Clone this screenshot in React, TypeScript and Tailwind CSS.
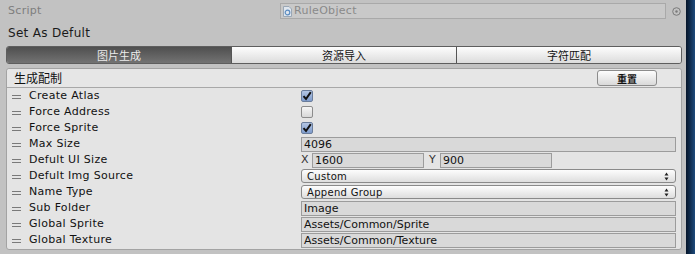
const font = "font-['DejaVu_Sans','Liberation_Sans',sans-serif]";
const cjk = "font-['Noto_Sans_CJK_SC','DejaVu_Sans',sans-serif]";

function Handle() {
  return (
    <div className="flex flex-col gap-[2px] w-[9px] ml-[5px] mr-[8px] mt-[1px]">
      <div className="h-px bg-[#7a7a7a]" />
      <div className="h-px bg-[#7a7a7a]" />
    </div>
  );
}

function Check({ on }: { on: boolean }) {
  return (
    <div
      className={
        "w-[12px] h-[12px] rounded-[2px] border flex items-center justify-center " +
        (on
          ? "border-[#6a7d9c] bg-gradient-to-b from-[#b4c6e4] to-[#7f9ccc]"
          : "border-[#8c8c8c] bg-gradient-to-b from-[#f6f6f6] to-[#d8d8d8]")
      }
    >
      {on && (
        <svg width="10" height="10" viewBox="0 0 10 10">
          <path d="M1.5 5.2 L4 8 L8.8 1.2" fill="none" stroke="#111" strokeWidth="2" />
        </svg>
      )}
    </div>
  );
}

function Field({ text, w }: { text: string; w?: string }) {
  return (
    <div
      className={
        "h-[15px] border border-[#9c9c9c] bg-[#d9d9d9] pl-[2px] text-[11px] leading-[13px] text-[#111] " +
        (w ?? "flex-1")
      }
    >
      {text}
    </div>
  );
}

function Popup({ text }: { text: string }) {
  return (
    <div className="flex-1 h-[14px] rounded-[3px] border border-[#8a8a8a] bg-gradient-to-b from-[#fdfdfd] to-[#dedede] flex items-center justify-between pl-[5px] pr-[6px] text-[10px] tracking-[0.3px] text-[#111]">
      <span>{text}</span>
      <svg width="5" height="9" viewBox="0 0 5 9">
        <path d="M2.5 0.5 L4.5 3.5 L0.5 3.5 Z M2.5 8.5 L4.5 5.5 L0.5 5.5 Z" fill="#222" />
      </svg>
    </div>
  );
}

function Row({ label, children }: { label: string; children: React.ReactNode }) {
  return (
    <div className="h-[16px] flex items-center">
      <div className="w-[294px] flex items-center shrink-0">
        <Handle />
        <span className="text-[11px] tracking-[0.3px] text-[#111]">{label}</span>
      </div>
      <div className="flex-1 flex items-center pr-[5px]">{children}</div>
    </div>
  );
}

export default function App() {
  const tabs = ["图片生成", "资源导入", "字符匹配"];
  return (
    <div className={"w-[695px] h-[254px] flex bg-[#c2c2c2] overflow-hidden " + font}>
      <div className="w-[686px] flex flex-col pl-[6px] pr-[4px]">
        {/* script row */}
        <div className="h-[22px] flex items-center">
          <span className="w-[274px] pl-[2px] text-[11px] tracking-[0.3px] text-[#7e7e7e]">Script</span>
          <div className="w-[386px] h-[16px] border border-[#a9a9a9] bg-[#c9c9c9] flex items-center pl-[2px] gap-[2px] text-[11px] tracking-[0.3px] text-[#8a8a8a]">
            <svg width="9" height="11" viewBox="0 0 9 11">
              <path d="M0.5 0.5 H6 L8.5 3 V10.5 H0.5 Z" fill="#dfe6ee" stroke="#9aa7b5" />
              <circle cx="4.5" cy="6.5" r="2.3" fill="none" stroke="#5a8bc0" strokeWidth="1.2" />
            </svg>
            <span>RuleObject</span>
          </div>
          <svg className="ml-[6px]" width="9" height="9" viewBox="0 0 9 9">
            <circle cx="4.5" cy="4.5" r="3.8" fill="none" stroke="#7a7a7a" strokeWidth="1" />
            <circle cx="4.5" cy="4.5" r="1.2" fill="#7a7a7a" />
          </svg>
        </div>
        {/* set as default */}
        <div className="h-[21px] flex items-center pl-[2px] text-[12px] tracking-[0.3px] text-[#1a1a1a]">
          Set As Defult
        </div>
        {/* tabs */}
        <div className="mt-[3px] h-[18px] flex rounded-[3px] border border-[#5e5e5e] overflow-hidden">
          {tabs.map((t, i) => (
            <div
              key={t}
              className={
                "flex-1 flex items-center justify-center text-[11px] " +
                cjk +
                (i === 0
                  ? " bg-gradient-to-b from-[#4f4f4f] to-[#737373] text-[#ececec]"
                  : " bg-gradient-to-b from-[#fdfdfd] to-[#dcdcdc] text-[#111] border-l border-[#555]")
              }
            >
              {t}
            </div>
          ))}
        </div>
        {/* box */}
        <div className="mt-[4px] h-[182px] border border-[#a3a3a3] rounded-[3px] bg-[#e4e4e4] flex flex-col">
          <div className="h-[19px] flex items-center border-b border-[#a8a8a8] bg-[#e6e6e6] rounded-t-[3px]">
            <span className={"pl-[7px] text-[12px] text-[#111] flex-1 " + cjk}>生成配制</span>
            <div className="w-[60px] h-[16px] mr-[24px] rounded-[3px] border border-[#8c8c8c] bg-gradient-to-b from-[#fdfdfd] to-[#d9d9d9] flex items-center justify-center">
              <span className={"text-[10px] font-bold text-[#111] " + cjk}>重置</span>
            </div>
          </div>
          <div className="flex flex-col">
            <Row label="Create Atlas"><Check on /></Row>
            <Row label="Force Address"><Check on={false} /></Row>
            <Row label="Force Sprite"><Check on /></Row>
            <Row label="Max Size"><Field text="4096" /></Row>
            <Row label="Defult UI Size">
              <span className="text-[11px] text-[#333] w-[11px]">X</span>
              <Field text="1600" w="w-[112px]" />
              <span className="text-[11px] text-[#333] w-[11px] ml-[5px]">Y</span>
              <Field text="900" w="w-[112px]" />
            </Row>
            <Row label="Defult Img Source"><Popup text="Custom" /></Row>
            <Row label="Name Type"><Popup text="Append Group" /></Row>
            <Row label="Sub Folder"><Field text="Image" /></Row>
            <Row label="Global Sprite"><Field text="Assets/Common/Sprite" /></Row>
            <Row label="Global Texture"><Field text="Assets/Common/Texture" /></Row>
          </div>
        </div>
      </div>
      <div className="w-[9px] bg-gradient-to-r from-[#06152a] to-[#1d4b7c]" />
    </div>
  );
}
